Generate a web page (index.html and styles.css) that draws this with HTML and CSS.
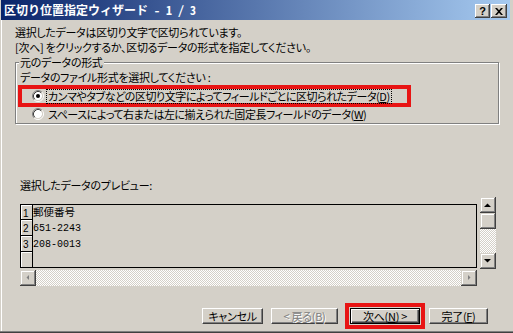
FILE: index.html
```html
<!DOCTYPE html>
<html lang="ja">
<head>
<meta charset="utf-8">
<title>区切り位置指定ウィザード</title>
<link rel="stylesheet" href="styles.css">
</head>
<body>
<div class="window">
  <div class="titlebar">
    <span class="title">区切り位置指定ウィザード - 1 / 3</span>
    <div class="tbtns">
      <span class="tbtn help">?</span>
      <span class="tbtn close"><svg width="8" height="7" viewBox="0 0 8 7"><path d="M0 0h2l2 2.2 2-2.2h2l-3 3.5 3 3.5h-2l-2-2.2-2 2.2h-2l3-3.5z" fill="#000"/></svg></span>
    </div>
  </div>
  <div class="content">
    <div class="intro">
      <div>選択したデータは区切り文字で区切られています。</div>
      <div>[次へ] をクリックするか、区切るデータの形式を指定してください。</div>
    </div>
    <fieldset class="group">
      <legend>元のデータの形式</legend>
      <div class="hint">データのファイル形式を選択してください :</div>
      <div class="mark">
        <div class="opt">
          <svg class="radio" width="12" height="12" viewBox="0 0 12 12"><circle cx="6" cy="6" r="4.2" fill="#fff"/><path d="M2.11 9.89A5.5 5.5 0 0 1 9.89 2.11" fill="none" stroke="#808080"/><path d="M9.89 2.11A5.5 5.5 0 0 1 2.11 9.89" fill="none" stroke="#fff"/><path d="M2.82 9.18A4.5 4.5 0 0 1 9.18 2.82" fill="none" stroke="#404040"/><path d="M9.18 2.82A4.5 4.5 0 0 1 2.82 9.18" fill="none" stroke="#d4d0c8"/><circle cx="6" cy="6" r="2" fill="#000"/></svg>
          <span class="label focus">カンマやタブなどの区切り文字によってフィールドごとに区切られたデータ(<u>D</u>)</span>
        </div>
      </div>
      <div class="opt opt2">
        <svg class="radio" width="12" height="12" viewBox="0 0 12 12"><circle cx="6" cy="6" r="4.2" fill="#fff"/><path d="M2.11 9.89A5.5 5.5 0 0 1 9.89 2.11" fill="none" stroke="#808080"/><path d="M9.89 2.11A5.5 5.5 0 0 1 2.11 9.89" fill="none" stroke="#fff"/><path d="M2.82 9.18A4.5 4.5 0 0 1 9.18 2.82" fill="none" stroke="#404040"/><path d="M9.18 2.82A4.5 4.5 0 0 1 2.82 9.18" fill="none" stroke="#d4d0c8"/></svg>
        <span class="label">スペースによって右または左に揃えられた固定長フィールドのデータ(<u>W</u>)</span>
      </div>
    </fieldset>
    <div class="plabel">選択したデータのプレビュー:</div>
    <div class="preview">
      <div class="table">
        <div class="row r1"><span class="num">1</span><span class="cell">郵便番号</span></div>
        <div class="row r2"><span class="num">2</span><span class="cell">651-2243</span></div>
        <div class="row r3"><span class="num">3</span><span class="cell">208-0013</span></div>
        <div class="row r4"><span class="num"></span><span class="cell"></span></div>
      </div>
      <div class="vscroll">
        <div class="sbtn"><svg width="16" height="16" viewBox="0 0 16 16"><path d="M4 10h7L7.5 6.5z" fill="#000"/></svg></div>
        <div class="sbtn thumb"></div>
        <div class="track"></div>
        <div class="sbtn"><svg width="16" height="16" viewBox="0 0 16 16"><path d="M4 6h7L7.5 9.5z" fill="#000"/></svg></div>
      </div>
      <div class="hscroll">
        <div class="sbtn"><svg width="16" height="16" viewBox="0 0 16 16"><path d="M9 5v5L6.5 7.5z" fill="#808080"/></svg></div>
        <div class="track"></div>
        <div class="sbtn"><svg width="16" height="16" viewBox="0 0 16 16"><path d="M7 5v5L9.5 7.5z" fill="#808080"/></svg></div>
      </div>
    </div>
    <div class="buttons">
      <span class="btn b-cancel">キャンセル</span>
      <span class="btn b-back disabled">&lt; 戻る(B)</span>
      <span class="mark2"><span class="btn b-next default">次へ(<u>N</u>) &gt;</span></span>
      <span class="btn b-finish">完了(<u>F</u>)</span>
    </div>
  </div>
</div>
</body>
</html>
```
FILE: styles.css
```css
* { box-sizing: border-box; }
html, body { margin: 0; padding: 0; }
body {
  width: 513px;
  height: 333px;
  overflow: hidden;
  background: #d4d0c8;
  color: #000;
  font-family: "Noto Sans CJK JP", sans-serif;
  font-size: 11px;
  letter-spacing: -0.3px;
  font-feature-settings: "palt";
}
.window {
  width: 513px;
  height: 333px;
  padding: 0 3px 2px 1px;
  display: flex;
  flex-direction: column;
  box-shadow: inset 0 -1px 0 #404040, inset 0 -2px 0 #808080;
}
.titlebar {
  flex: none;
  height: 20px;
  background: linear-gradient(to right, #0a246a, #a6caf0);
  display: flex;
  justify-content: space-between;
  padding: 0 3px;
}
.title {
  color: #fff;
  font-weight: bold;
  font-size: 12px;
  letter-spacing: 0;
  font-feature-settings: "hwid";
  line-height: 20px;
  white-space: pre;
}
.tbtns {
  display: flex;
  gap: 1px;
  margin-top: 4px;
}
.tbtn {
  width: 16px;
  height: 14px;
  background: #d4d0c8;
  box-shadow: inset -1px -1px #404040, inset 1px 1px #fff, inset -2px -2px #808080;
  display: flex;
  align-items: center;
  justify-content: center;
}
.help {
  width: 15px;
  font-family: "Liberation Sans", sans-serif;
  font-weight: bold;
  font-size: 11px;
  letter-spacing: 0;
  line-height: 14px;
  padding-bottom: 1px;
}
.content {
  flex: 1;
  border-left: 1px solid #fff;
}
.intro {
  margin: 5px 0 0 13px;
  line-height: 15px;
}
.group {
  margin: 1px 0 0 13px;
  width: 484px;
  min-width: 0;
  border: 1px solid #808080;
  box-shadow: inset 1px 1px #fff, 1px 1px #fff;
  padding: 0 0 2px 2px;
}
.group legend {
  margin-left: 1px;
  padding: 0 1px;
  line-height: 13px;
  background: #d4d0c8;
}
.hint {
  margin-top: 1px;
  padding-left: 2px;
  line-height: 14px;
}
.mark {
  margin-top: 1px;
  width: 393px;
  height: 22px;
  border: 4px solid #e81414;
  padding-left: 10px;
}
.opt {
  display: flex;
  align-items: center;
  height: 14px;
  white-space: nowrap;
}
.opt2 { padding-left: 14px; }
.radio { flex: none; margin-right: 3px; }
.label {
  line-height: 13px;
  padding: 0 1px;
  letter-spacing: -0.45px;
}
.focus { outline: 1px dotted #000; }
.plabel {
  margin: 54px 0 0 18px;
  line-height: 14px;
}
.preview {
  margin: 5px 0 0 18px;
  display: grid;
  grid-template-columns: 457px 16px;
  column-gap: 3px;
  align-items: start;
}
.table {
  margin-top: 7px;
  height: 64px;
  border: 1px solid #000;
  display: flex;
  flex-direction: column;
  overflow: hidden;
}
.row { display: flex; overflow: hidden; }
.r1 { height: 15px; }
.r2, .r3 { height: 16px; }
.r4 { height: 15px; }
.num {
  flex: none;
  width: 12px;
  border-right: 1px solid #000;
  border-bottom: 1px solid #000;
  box-shadow: inset 1px 1px #fff;
  font-family: "Liberation Sans", sans-serif;
  font-size: 10px;
  letter-spacing: 0;
  line-height: 10px;
  padding: 4px 0 0 2px;
}
.r4 .num { border-bottom: none; }
.cell {
  font-family: "Liberation Mono", "Noto Sans CJK JP", monospace;
  font-size: 10px;
  letter-spacing: 0;
  line-height: 14px;
  padding-top: 2px;
  white-space: pre;
}
.r1 .cell { font-size: 10.5px; padding-top: 1px; }
.vscroll {
  grid-row: 1;
  grid-column: 2;
  height: 72px;
  display: flex;
  flex-direction: column;
}
.hscroll {
  grid-row: 2;
  grid-column: 1;
  margin-top: 1px;
  height: 16px;
  display: flex;
}
.sbtn {
  flex: none;
  width: 16px;
  height: 16px;
  background: #d4d0c8;
  box-shadow: inset -1px -1px #404040, inset 1px 1px #d4d0c8, inset -2px -2px #808080, inset 2px 2px #fff;
}
.sbtn svg { display: block; }
.track {
  flex: 1;
  background-image: repeating-conic-gradient(#fff 0 25%, #d4d0c8 0 50%);
  background-size: 2px 2px;
}
.buttons {
  margin: 17px 0 0 200px;
  display: flex;
  align-items: center;
}
.btn {
  height: 16px;
  display: flex;
  align-items: center;
  justify-content: center;
  line-height: 14px;
  background: #d4d0c8;
  border: 1px solid;
  border-color: #fff #404040 #404040 #fff;
  box-shadow: inset -1px -1px #808080;
  white-space: pre;
}
.b-cancel { width: 61px; }
.b-back { width: 67px; margin-left: 8px; }
.mark2 {
  margin-left: 7px;
  border: 4px solid #e81414;
  padding: 1px;
  display: flex;
}
.b-next { width: 70px; }
.b-finish { width: 59px; margin-left: 4px; }
.disabled { color: #808080; text-shadow: 1px 1px #fff; }
.default {
  border: 1px solid #000;
  box-shadow: inset 1px 1px #fff, inset -1px -1px #404040, inset -2px -2px #808080;
}
```
